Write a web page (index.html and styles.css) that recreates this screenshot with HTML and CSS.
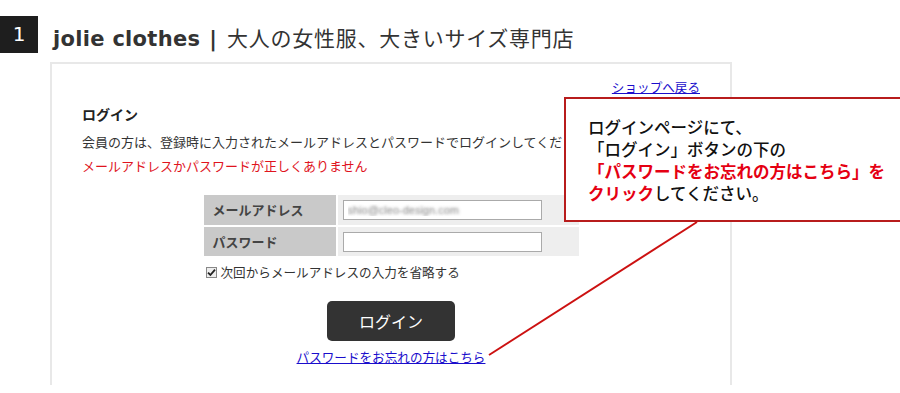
FILE: index.html
```html
<!doctype html>
<html>
 <head>
  <title>ログイン | jolie clothes</title>
  <link rel="stylesheet" href="styles.css">
 </head>
 <body>
  <div class="page">
   <div class="header">
    <div class="num">1</div>
    <h1><span class="brand">jolie clothes</span><span class="bar">|</span><span class="sub">大人の女性服、大きいサイズ専門店</span></h1>
   </div>

   <div class="panel">
    <div class="back"><a href="#">ショップへ戻る</a></div>
    <h2>ログイン</h2>
    <p class="desc">会員の方は、登録時に入力されたメールアドレスとパスワードでログインしてください。</p>
    <p class="error">メールアドレスかパスワードが正しくありません</p>

    <div class="login-table">
     <div class="label">メールアドレス</div>
     <div class="value"><input type="text" class="blurred" value="shio@cleo-design.com"></div>
     <div class="label">パスワード</div>
     <div class="value"><input type="password"></div>
    </div>

    <div class="remember">
     <span class="check"><svg width="9" height="9" viewBox="0 0 9 9"><path d="M1 4.6 L3.4 7 L8 1.6" fill="none" stroke="#222" stroke-width="1.8"/></svg></span>
     次回からメールアドレスの入力を省略する
    </div>

    <div class="btn-row"><button class="btn-login">ログイン</button></div>
    <div class="forgot"><a href="#">パスワードをお忘れの方はこちら</a></div>
   </div>

   <div class="callout">
    ログインページにて、<br>
    「ログイン」ボタンの下の<br>
    <strong>「パスワードをお忘れの方はこちら」を<br>クリック</strong>してください。
   </div>

   <svg class="pointer" width="900" height="393">
    <line x1="697" y1="222" x2="489" y2="355" stroke="#cc1111" stroke-width="2"/>
   </svg>
  </div>
 </body>
</html>
```

FILE: styles.css
```css
body {
  margin: 0;
  font-family: "Noto Sans CJK JP", "Liberation Sans", sans-serif;
  color: #333;
  background: #fff;
}

.page {
  position: relative;
  width: 900px;
  height: 393px;
  overflow: hidden;
}

.header {
  display: flex;
  align-items: center;
  padding-top: 16px;
  height: 37px;
}

.num {
  width: 38px;
  height: 37px;
  background: #1e1e1e;
  color: #fff;
  font-family: "DejaVu Sans", sans-serif;
  font-size: 20px;
  line-height: 37px;
  text-align: center;
}

.header h1 {
  margin: 4px 0 0 15px;
  font-size: 21px;
  font-weight: normal;
  white-space: nowrap;
}

.brand {
  font-family: "DejaVu Sans", sans-serif;
  font-weight: bold;
  letter-spacing: 0.3px;
}

.bar {
  font-family: "DejaVu Sans", sans-serif;
  font-weight: bold;
  margin: 0 10px 0 9px;
}

.sub {
  font-family: "Noto Sans CJK JP", sans-serif;
  letter-spacing: 0.75px;
}

.panel {
  box-sizing: border-box;
  width: 682px;
  height: 323px;
  margin: 9px 0 0 50px;
  padding: 14px 30px 0;
  border: 2px solid #e8e8e8;
  border-bottom: none;
}

.back {
  text-align: right;
  font-size: 12.6px;
  line-height: 18px;
}

a {
  color: #1a0dcc;
}

.panel h2 {
  margin: 8px 0 0;
  font-size: 14px;
  line-height: 20px;
  color: #222;
}

.desc,
.error {
  margin: 8px 0 0;
  font-size: 13px;
  line-height: 20px;
  white-space: nowrap;
}

.error {
  margin-top: 4px;
  color: #e0141e;
}

.login-table {
  display: grid;
  grid-template-columns: 132px 241px;
  grid-template-rows: 30px 29px;
  gap: 2px;
  width: 375px;
  margin: 19px auto 0;
}

.label {
  background: #c9c9c9;
  font-size: 13px;
  font-weight: bold;
  color: #444;
  padding-left: 9px;
  line-height: 30px;
}

.value {
  background: #eee;
  display: flex;
  align-items: center;
  padding-left: 5px;
}

.value input {
  box-sizing: border-box;
  width: 199px;
  height: 20px;
  border: 1px solid #aaa;
  background: #fff;
  padding: 0 4px;
  font-size: 11px;
}

.blurred {
  color: transparent;
  text-shadow: 0 0 3px rgba(80, 80, 80, 0.7);
}

.remember {
  display: flex;
  align-items: center;
  gap: 4px;
  width: 375px;
  margin: 6px auto 0;
  font-size: 12.6px;
  line-height: 20px;
}

.check {
  display: flex;
  align-items: center;
  justify-content: center;
  box-sizing: border-box;
  width: 11px;
  height: 11px;
  border: 1px solid #888;
  background: #eee;
  margin-left: 2px;
}

.btn-row {
  margin-top: 19px;
  text-align: center;
}

.btn-login {
  width: 128px;
  height: 40px;
  background: #333;
  color: #fff;
  border: none;
  border-radius: 5px;
  font-family: "Noto Sans CJK JP", sans-serif;
  font-size: 16px;
  cursor: pointer;
}

.forgot {
  margin-top: 6px;
  text-align: center;
  font-size: 12.6px;
  line-height: 20px;
}

.callout {
  position: absolute;
  left: 564px;
  top: 97px;
  width: 340px;
  height: 125px;
  box-sizing: border-box;
  border: 2px solid #b81c1c;
  background: #fff;
  padding: 17px 0 0 22px;
  font-size: 16.5px;
  font-weight: 500;
  line-height: 22px;
  color: #111;
}

.callout strong {
  color: #e50012;
  font-weight: bold;
}

.pointer {
  position: absolute;
  left: 0;
  top: 0;
  pointer-events: none;
}
```
